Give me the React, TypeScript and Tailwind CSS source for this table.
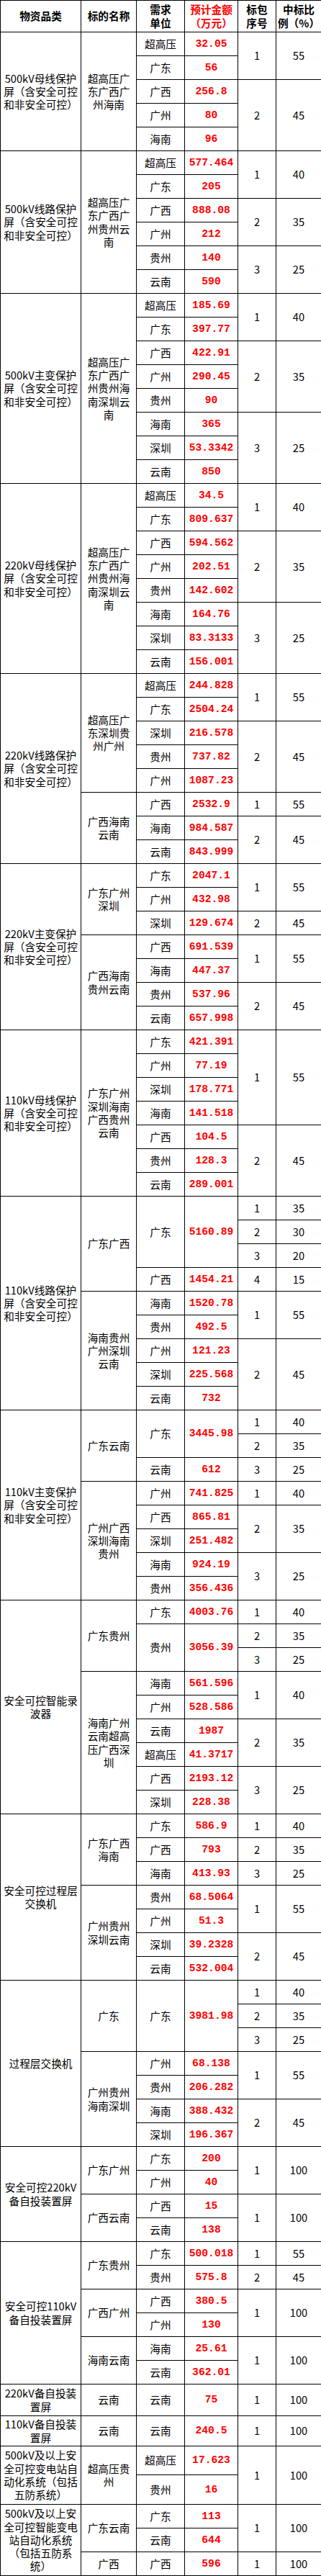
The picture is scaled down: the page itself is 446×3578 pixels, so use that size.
import React from "react";

// [unit, amount, rowSpan]
type Unit = [string, string, number?];
// [package no, percent, rowSpan]
type Pkg = [string, string, number];
type Sub = { name: string[]; units: Unit[]; pkgs: Pkg[] };
type Group = { cat: string[]; subs: Sub[]; heights?: string[] };

const tail = ["屏（含安全可控", "和非安全可控）"];
const bigName = ["超高压广", "东广西广", "州贵州海", "南深圳云", "南"];

const groups: Group[] = [
  {
    cat: ["500kV母线保护", ...tail],
    subs: [
      {
        name: ["超高压广", "东广西广", "州海南"],
        units: [["超高压", "32.05"], ["广东", "56"], ["广西", "256.8"], ["广州", "80"], ["海南", "96"]],
        pkgs: [["1", "55", 2], ["2", "45", 3]],
      },
    ],
  },
  {
    cat: ["500kV线路保护", ...tail],
    subs: [
      {
        name: ["超高压广", "东广西广", "州贵州云", "南"],
        units: [["超高压", "577.464"], ["广东", "205"], ["广西", "888.08"], ["广州", "212"], ["贵州", "140"], ["云南", "590"]],
        pkgs: [["1", "40", 2], ["2", "35", 2], ["3", "25", 2]],
      },
    ],
  },
  {
    cat: ["500kV主变保护", ...tail],
    subs: [
      {
        name: bigName,
        units: [["超高压", "185.69"], ["广东", "397.77"], ["广西", "422.91"], ["广州", "290.45"], ["贵州", "90"], ["海南", "365"], ["深圳", "53.3342"], ["云南", "850"]],
        pkgs: [["1", "40", 2], ["2", "35", 3], ["3", "25", 3]],
      },
    ],
  },
  {
    cat: ["220kV母线保护", ...tail],
    subs: [
      {
        name: bigName,
        units: [["超高压", "34.5"], ["广东", "809.637"], ["广西", "594.562"], ["广州", "202.51"], ["贵州", "142.602"], ["海南", "164.76"], ["深圳", "83.3133"], ["云南", "156.001"]],
        pkgs: [["1", "40", 2], ["2", "35", 3], ["3", "25", 3]],
      },
    ],
  },
  {
    cat: ["220kV线路保护", ...tail],
    subs: [
      {
        name: ["超高压广", "东深圳贵", "州广州"],
        units: [["超高压", "244.828"], ["广东", "2504.24"], ["深圳", "216.578"], ["贵州", "737.82"], ["广州", "1087.23"]],
        pkgs: [["1", "55", 2], ["2", "45", 3]],
      },
      {
        name: ["广西海南", "云南"],
        units: [["广西", "2532.9"], ["海南", "984.587"], ["云南", "843.999"]],
        pkgs: [["1", "55", 1], ["2", "45", 2]],
      },
    ],
  },
  {
    cat: ["220kV主变保护", ...tail],
    subs: [
      {
        name: ["广东广州", "深圳"],
        units: [["广东", "2047.1"], ["广州", "432.98"], ["深圳", "129.674"]],
        pkgs: [["1", "55", 2], ["2", "45", 1]],
      },
      {
        name: ["广西海南", "贵州云南"],
        units: [["广西", "691.539"], ["海南", "447.37"], ["贵州", "537.96"], ["云南", "657.998"]],
        pkgs: [["1", "55", 2], ["2", "45", 2]],
      },
    ],
  },
  {
    cat: ["110kV母线保护", ...tail],
    subs: [
      {
        name: ["广东广州", "深圳海南", "广西贵州", "云南"],
        units: [["广东", "421.391"], ["广州", "77.19"], ["深圳", "178.771"], ["海南", "141.518"], ["广西", "104.5"], ["贵州", "128.3"], ["云南", "289.001"]],
        pkgs: [["1", "55", 4], ["2", "45", 3]],
      },
    ],
  },
  {
    cat: ["110kV线路保护", ...tail],
    subs: [
      {
        name: ["广东广西"],
        units: [["广东", "5160.89", 3], ["广西", "1454.21"]],
        pkgs: [["1", "35", 1], ["2", "30", 1], ["3", "20", 1], ["4", "15", 1]],
      },
      {
        name: ["海南贵州", "广州深圳", "云南"],
        units: [["海南", "1520.78"], ["贵州", "492.5"], ["广州", "121.23"], ["深圳", "225.568"], ["云南", "732"]],
        pkgs: [["1", "55", 2], ["2", "45", 3]],
      },
    ],
  },
  {
    cat: ["110kV主变保护", ...tail],
    subs: [
      {
        name: ["广东云南"],
        units: [["广东", "3445.98", 2], ["云南", "612"]],
        pkgs: [["1", "40", 1], ["2", "35", 1], ["3", "25", 1]],
      },
      {
        name: ["广州广西", "深圳海南", "贵州"],
        units: [["广州", "741.825"], ["广西", "865.81"], ["深圳", "251.482"], ["海南", "924.19"], ["贵州", "356.436"]],
        pkgs: [["1", "40", 1], ["2", "35", 2], ["3", "25", 2]],
      },
    ],
  },
  {
    cat: ["安全可控智能录", "波器"],
    subs: [
      {
        name: ["广东贵州"],
        units: [["广东", "4003.76"], ["贵州", "3056.39", 2]],
        pkgs: [["1", "40", 1], ["2", "35", 1], ["3", "25", 1]],
      },
      {
        name: ["海南广州", "云南超高", "压广西深", "圳"],
        units: [["海南", "561.596"], ["广州", "528.586"], ["云南", "1987"], ["超高压", "41.3717"], ["广西", "2193.12"], ["深圳", "228.38"]],
        pkgs: [["1", "40", 2], ["2", "35", 2], ["3", "25", 2]],
      },
    ],
  },
  {
    cat: ["安全可控过程层", "交换机"],
    subs: [
      {
        name: ["广东广西", "海南"],
        units: [["广东", "586.9"], ["广西", "793"], ["海南", "413.93"]],
        pkgs: [["1", "40", 1], ["2", "35", 1], ["3", "25", 1]],
      },
      {
        name: ["广州贵州", "深圳云南"],
        units: [["贵州", "68.5064"], ["广州", "51.3"], ["深圳", "39.2328"], ["云南", "532.004"]],
        pkgs: [["1", "55", 2], ["2", "45", 2]],
      },
    ],
  },
  {
    cat: ["过程层交换机"],
    subs: [
      {
        name: ["广东"],
        units: [["广东", "3981.98", 3]],
        pkgs: [["1", "40", 1], ["2", "35", 1], ["3", "25", 1]],
      },
      {
        name: ["广州贵州", "海南深圳"],
        units: [["广州", "68.138"], ["贵州", "206.282"], ["海南", "388.432"], ["深圳", "196.367"]],
        pkgs: [["1", "55", 2], ["2", "45", 2]],
      },
    ],
  },
  {
    cat: ["安全可控220kV", "备自投装置屏"],
    subs: [
      { name: ["广东广州"], units: [["广东", "200"], ["广州", "40"]], pkgs: [["1", "100", 2]] },
      { name: ["广西云南"], units: [["广西", "15"], ["云南", "138"]], pkgs: [["1", "100", 2]] },
    ],
  },
  {
    cat: ["安全可控110kV", "备自投装置屏"],
    subs: [
      { name: ["广东贵州"], units: [["广东", "500.018"], ["贵州", "575.8"]], pkgs: [["1", "55", 1], ["2", "45", 1]] },
      { name: ["广西广州"], units: [["广西", "380.5"], ["广州", "130"]], pkgs: [["1", "100", 2]] },
      { name: ["海南云南"], units: [["海南", "25.61"], ["云南", "362.01"]], pkgs: [["1", "100", 2]] },
    ],
  },
  {
    cat: ["220kV备自投装", "置屏"],
    heights: ["h-[44px]"],
    subs: [{ name: ["云南"], units: [["云南", "75"]], pkgs: [["1", "100", 1]] }],
  },
  {
    cat: ["110kV备自投装", "置屏"],
    heights: ["h-[42px]"],
    subs: [{ name: ["云南"], units: [["云南", "240.5"]], pkgs: [["1", "100", 1]] }],
  },
  {
    cat: ["500kV及以上安", "全可控变电站自", "动化系统（包括", "五防系统）"],
    heights: ["h-[40px]", "h-[41px]"],
    subs: [
      { name: ["超高压贵", "州"], units: [["超高压", "17.623"], ["贵州", "16"]], pkgs: [["1", "100", 2]] },
    ],
  },
  {
    cat: ["500kV及以上安", "全可控智能变电", "站自动化系统", "（包括五防系", "统）"],
    subs: [
      { name: ["广东云南"], units: [["广东", "113"], ["云南", "644"]], pkgs: [["1", "100", 2]] },
      { name: ["广西"], units: [["广西", "596"]], pkgs: [["1", "100", 1]] },
    ],
  },
];

const td = "border border-black text-center align-middle p-0";
const amt = "font-['Liberation_Mono',monospace] font-bold text-[#ff0000]";

function Lines({ lines }: { lines: string[] }) {
  return (
    <>
      {lines.map((l, i) => (
        <div key={i} className="whitespace-nowrap">
          {l}
        </div>
      ))}
    </>
  );
}

function buildRows() {
  const out: React.ReactNode[] = [];
  groups.forEach((g, gi) => {
    const count = (s: Sub) => s.units.reduce((a, u) => a + (u[2] ?? 1), 0);
    const total = g.subs.reduce((a, s) => a + count(s), 0);
    let gr = 0;
    g.subs.forEach((sub, si) => {
      const n = count(sub);
      const cells: React.ReactNode[][] = Array.from({ length: n }, () => []);
      if (si === 0)
        cells[0].push(
          <td key="cat" rowSpan={total} className={td}>
            <Lines lines={g.cat} />
          </td>
        );
      cells[0].push(
        <td key="name" rowSpan={n} className={td}>
          <Lines lines={sub.name} />
        </td>
      );
      const unitAt: React.ReactNode[][] = Array.from({ length: n }, () => []);
      let r = 0;
      sub.units.forEach((u, ui) => {
        const span = u[2] ?? 1;
        unitAt[r].push(
          <td key={"u" + ui} rowSpan={span} className={td}>
            {u[0]}
          </td>,
          <td key={"a" + ui} rowSpan={span} className={td + " " + amt}>
            {u[1]}
          </td>
        );
        r += span;
      });
      const pkgAt: React.ReactNode[][] = Array.from({ length: n }, () => []);
      r = 0;
      sub.pkgs.forEach((p, pi) => {
        pkgAt[r].push(
          <td key={"p" + pi} rowSpan={p[2]} className={td}>
            {p[0]}
          </td>,
          <td key={"c" + pi} rowSpan={p[2]} className={td}>
            {p[1]}
          </td>
        );
        r += p[2];
      });
      for (let i = 0; i < n; i++) {
        const h = g.heights?.[gr] ?? "h-[33px]";
        out.push(
          <tr key={`${gi}-${si}-${i}`} className={h}>
            {cells[i]}
            {unitAt[i]}
            {pkgAt[i]}
          </tr>
        );
        gr++;
      }
    });
  });
  return out;
}

export default function App() {
  return (
    <div className="bg-white w-[446px] font-['Noto_Sans_CJK_SC',sans-serif] text-[14.67px] leading-[18.33px] text-black">
      <table className="w-[446px] table-fixed border-collapse">
        <colgroup>
          <col className="w-[112px]" />
          <col className="w-[77px]" />
          <col className="w-[67px]" />
          <col className="w-[74px]" />
          <col className="w-[53px]" />
          <col className="w-[63px]" />
        </colgroup>
        <thead>
          <tr className="h-[44px] font-bold">
            <td className={td}>物资品类</td>
            <td className={td}>标的名称</td>
            <td className={td}>
              <Lines lines={["需求", "单位"]} />
            </td>
            <td className={td + " text-[#ff0000]"}>
              <Lines lines={["预计金额", "（万元）"]} />
            </td>
            <td className={td}>
              <Lines lines={["标包", "序号"]} />
            </td>
            <td className={td}>
              <Lines lines={["中标比", "例（%）"]} />
            </td>
          </tr>
        </thead>
        <tbody>{buildRows()}</tbody>
      </table>
    </div>
  );
}
